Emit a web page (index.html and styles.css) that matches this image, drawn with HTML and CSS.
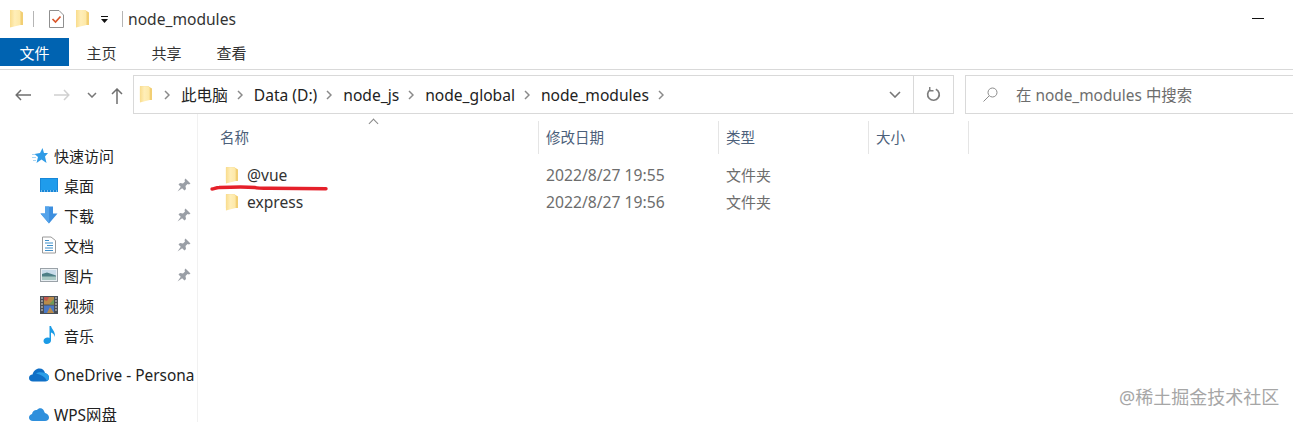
FILE: index.html
```html
<!DOCTYPE html>
<html lang="zh-CN">

<head>
    <meta charset="UTF-8">
    <title>node_modules</title>
    <link rel="stylesheet" href="styles.css">
</head>

<body>
    <svg class="defs" width="0" height="0">
        <defs>
            <linearGradient id="folderFace" x1="0" x2="1" y1="0" y2="0">
                <stop offset="0" stop-color="#f9dc8c" />
                <stop offset=".45" stop-color="#ffeeb8" />
                <stop offset="1" stop-color="#fde8a6" />
            </linearGradient>
        </defs>
        <symbol id="folder" viewBox="0 0 14 18">
            <path d="M1 0H10L14 2.500V15H1Z" fill="#f2cf74" />
            <path d="M1 0H10.500L11.500 2V15L1 17.500Z" fill="url(#folderFace)" />
        </symbol>
        <symbol id="pin" viewBox="0 0 14 14">
            <path d="M8.500.5L13.500 5.500L12 6.500L10.500 6L8.500 8L9 11L7.500 12.500L1.500 6.500L3 5L6 5.500L8 3.500L7.500 2Z" fill="#9a9fa6" />
            <path d="M4 8.500L.5 13.500L5.500 10Z" fill="#9a9fa6" />
        </symbol>
        <symbol id="chev" viewBox="0 0 6 10">
            <path d="M1 1L5 5L1 9" fill="none" stroke="#8a8a8a" stroke-width="1.500" />
        </symbol>
    </svg>

    <header class="titlebar">
        <svg class="qa-folder"><use href="#folder" /></svg>
        <span class="qa-sep"></span>
        <svg class="qa-check" viewBox="0 0 15 18">
            <path d="M.5.500H10L14.500 5V17.500H.5Z" fill="#fff" stroke="#8f8f8f" />
            <path d="M3.500 9L6.500 12L11.500 6.500" fill="none" stroke="#d9572b" stroke-width="1.700" />
        </svg>
        <svg class="qa-folder2"><use href="#folder" /></svg>
        <svg class="qa-drop" viewBox="0 0 7 7">
            <path d="M0 0H7V1H0ZM0 3H7L3.500 7Z" fill="#111" />
        </svg>
        <span class="qa-sep2"></span>
        <span class="title-text">node_modules</span>
        <span class="minimize"></span>
    </header>

    <nav class="ribbon">
        <a class="tab tab-file">文件</a>
        <a class="tab">主页</a>
        <a class="tab">共享</a>
        <a class="tab">查看</a>
    </nav>

    <div class="navbar">
        <div class="nav-buttons">
            <svg class="nav-back" viewBox="0 0 16 12">
                <path d="M6 1L1.200 6L6 11M1.200 6H16" fill="none" stroke="#6f6f6f" stroke-width="1.500" />
            </svg>
            <svg class="nav-forward" viewBox="0 0 16 12">
                <path d="M10 1L14.800 6L10 11M14.800 6H0" fill="none" stroke="#d0d0d0" stroke-width="1.500" />
            </svg>
            <svg class="nav-recent" viewBox="0 0 10 6">
                <path d="M1 1L5 5L9 1" fill="none" stroke="#777" stroke-width="1.500" />
            </svg>
            <svg class="nav-up" viewBox="0 0 12 16">
                <path d="M1 6L6 1L11 6M6 1V16" fill="none" stroke="#6f6f6f" stroke-width="1.500" />
            </svg>
        </div>

        <div class="address">
            <svg class="addr-folder"><use href="#folder" /></svg>
            <svg class="chev"><use href="#chev" /></svg>
            <span>此电脑</span>
            <svg class="chev"><use href="#chev" /></svg>
            <span>Data (D:)</span>
            <svg class="chev"><use href="#chev" /></svg>
            <span>node_js</span>
            <svg class="chev"><use href="#chev" /></svg>
            <span>node_global</span>
            <svg class="chev"><use href="#chev" /></svg>
            <span>node_modules</span>
            <svg class="chev"><use href="#chev" /></svg>
            <svg class="addr-drop" viewBox="0 0 12 7">
                <path d="M1 1L6 6L11 1" fill="none" stroke="#777" stroke-width="1.600" />
            </svg>
            <div class="addr-refresh">
                <svg viewBox="0 0 16 16" width="15" height="15">
                    <path d="M10.500 2.300A6.200 6.200 0 1 1 4.500 2.800" fill="none" stroke="#7d7d7d" stroke-width="1.800" />
                    <path d="M4 0V4H8" fill="none" stroke="#7d7d7d" stroke-width="1.500" />
                </svg>
            </div>
        </div>

        <div class="search">
            <svg class="search-icon" viewBox="0 0 15 15">
                <circle cx="9.500" cy="5.500" r="4.500" fill="none" stroke="#8c8c8c" />
                <path d="M6 9L.5 14.500" stroke="#8c8c8c" />
            </svg>
            <span>在 node_modules 中搜索</span>
        </div>
    </div>

    <div class="main">
        <aside class="sidebar">
            <div class="side-row side-top">
                <svg class="ic-star" viewBox="0 0 16 15">
                    <path d="M10.500 0L12 5L16 5L13 8.500L14.500 15L9.500 11.500L4.500 15L6 9L2.500 6L8 5Z" fill="#2f9be6" />
                    <path d="M0 6.500H3M0 9.500H4M1 12.500H4" stroke="#a9d4f2" />
                </svg>
                <span>快速访问</span>
            </div>
            <div class="side-row">
                <svg class="ic" viewBox="0 0 18 14">
                    <rect width="18" height="14" fill="#1787d8" />
                    <rect x="1" y="1" width="16" height="11" fill="#1f9cec" />
                    <path d="M1 13H17" stroke="#d5ecfb" stroke-dasharray="1 2" />
                </svg>
                <span>桌面</span>
                <svg class="pin"><use href="#pin" /></svg>
            </div>
            <div class="side-row">
                <svg class="ic" viewBox="0 0 18 17">
                    <path d="M5 0H13V7H17.500L9 17L.5 7H5Z" fill="#3d8fdf" />
                    <path d="M5 0H9V17L.5 7H5Z" fill="#54a3ea" />
                </svg>
                <span>下载</span>
                <svg class="pin"><use href="#pin" /></svg>
            </div>
            <div class="side-row">
                <svg class="ic" viewBox="0 0 18 17">
                    <path d="M2.500.5H11L15.500 4V16.500H2.500Z" fill="#fff" stroke="#9a9a9a" />
                    <path d="M5 4H9M5 6.500H13M7 9H13M5 11.500H13M5 14H13" stroke="#3f8fc9" />
                </svg>
                <span>文档</span>
                <svg class="pin"><use href="#pin" /></svg>
            </div>
            <div class="side-row">
                <svg class="ic" viewBox="0 0 18 14">
                    <rect x=".5" y=".5" width="17" height="13" fill="#e9eff3" stroke="#9aa2a8" />
                    <rect x="2" y="2" width="14" height="5" fill="#c9dcea" />
                    <path d="M2 6L7 4.500L16 7.500V9H2Z" fill="#4d7f86" />
                    <rect x="2" y="8.500" width="14" height="3.500" fill="#a9c9c4" />
                </svg>
                <span>图片</span>
                <svg class="pin"><use href="#pin" /></svg>
            </div>
            <div class="side-row">
                <svg class="ic" viewBox="0 0 18 18">
                    <rect width="18" height="18" fill="#4a4f55" />
                    <rect x="4" y="1" width="10" height="7.500" fill="#b98b4a" />
                    <path d="M4 1H9L7 5L4 4Z" fill="#c2574f" />
                    <path d="M9 8.500L14 3V8.500Z" fill="#6f9a58" />
                    <rect x="4" y="9.500" width="10" height="7.500" fill="#4a78c4" />
                    <path d="M7 17L10 11L14 17Z" fill="#b98b4a" />
                    <path d="M1 2H3M1 5H3M1 8H3M1 11H3M1 14H3M15 2H17M15 5H17M15 8H17M15 11H17M15 14H17" stroke="#d8d8d8" stroke-width="1.200" />
                </svg>
                <span>视频</span>
            </div>
            <div class="side-row">
                <svg class="ic" viewBox="0 0 18 18">
                    <path d="M9.500 0H11C11.500 3 15.500 5 15 11C14 8 12.500 7 11 6.500V14.500C11 16.500 9 18 6.500 18C4.500 18 3.500 16.500 3.500 15C3.500 13 5.500 11.500 7.500 11.500C8.500 11.500 9 11.800 9.500 12Z" fill="#1b9be6" />
                </svg>
                <span>音乐</span>
            </div>
            <div class="side-row side-top side-gap">
                <svg class="ic-cloud" viewBox="0 0 20 13">
                    <path d="M4 13C1.500 13 0 11.500 0 9.500C0 7.500 1.500 6 3.500 6C4.500 2.500 7 0 10.500 0C13.500 0 15.500 2 16 4.500C18.500 5 20 7 20 9C20 11.500 18.500 13 16 13Z" fill="#0f6fc6" />
                    <path d="M7 5C9 3.500 13 3.500 16 4.500C18.500 5 20 7 20 9C20 11 19 12 18 12.500C16 8 12 6 7 5Z" fill="#2a9ee8" />
                </svg>
                <span class="side-latin">OneDrive - Persona</span>
            </div>
            <div class="side-row side-top side-gap2">
                <svg class="ic-cloud" viewBox="0 0 20 14">
                    <path d="M4 14C1.500 14 0 12.500 0 10.500C0 8.500 1.500 7.500 3 7C3.500 4 6 2.500 8 3C9.500 .5 13 .5 14.500 3C15.500 5 15.500 5.500 16 6C18.500 6.500 20 8.500 20 10.500C20 12.500 18.500 14 16 14Z" fill="#2e8fdc" />
                </svg>
                <span class="side-latin">WPS网盘</span>
            </div>
        </aside>

        <section class="files">
            <div class="file-head">
                <div class="col col-name">名称<span class="sort-caret"></span></div>
                <div class="col">修改日期</div>
                <div class="col">类型</div>
                <div class="col">大小</div>
            </div>
            <div class="file-row first">
                <div class="cell-name"><svg class="file-folder"><use href="#folder" /></svg>@vue</div>
                <div class="cell cell-date">2022/8/27 19:55</div>
                <div class="cell">文件夹</div>
            </div>
            <div class="file-row">
                <div class="cell-name"><svg class="file-folder"><use href="#folder" /></svg>express</div>
                <div class="cell cell-date">2022/8/27 19:56</div>
                <div class="cell">文件夹</div>
            </div>
        </section>
    </div>

    <svg class="red-line" viewBox="0 0 118 6" width="118" height="6">
        <path d="M2 4C4 4 6 2.500 9 2.500C20 2 40 2 45 2.500C46 3 50 3.300 60 3.300L116 3.800" fill="none" stroke="#e5202a" stroke-width="3.400" stroke-linecap="round" />
    </svg>
    <div class="watermark">@稀土掘金技术社区</div>
</body>

</html>
```

FILE: styles.css
```css
* {
    box-sizing: border-box;
}

html,
body {
    margin: 0;
    height: 100%;
}

body {
    position: relative;
    width: 1293px;
    height: 422px;
    overflow: hidden;
    background-color: white;
    font-family: "Noto Sans", "Noto Sans CJK SC", sans-serif;
    font-size: 15.600px;
    color: #222;
}

svg {
    display: block;
    flex: none;
}

.defs {
    position: absolute;
}

/* title bar */
.titlebar {
    display: flex;
    align-items: center;
    height: 38px;
    padding-left: 9px;
}

.qa-folder,
.qa-folder2 {
    width: 14px;
    height: 18px;
}

.qa-sep {
    width: 1px;
    height: 16px;
    margin-left: 10px;
    background-color: #b5b5b5;
}

.qa-check {
    width: 15px;
    height: 18px;
    margin-left: 15px;
}

.qa-folder2 {
    margin-left: 11px;
}

.qa-drop {
    width: 7px;
    height: 7px;
    margin-left: 12px;
}

.qa-sep2 {
    width: 1px;
    height: 16px;
    margin-left: 14px;
    background-color: #b5b5b5;
}

.title-text {
    margin-left: 5px;
    color: #333;
}

.minimize {
    width: 12px;
    height: 1px;
    margin-left: auto;
    margin-right: 29px;
    margin-bottom: 2px;
    background-color: #111;
}

/* ribbon tabs */
.ribbon {
    display: flex;
    align-items: flex-start;
    height: 32px;
    border-bottom: 1px solid #d9d9d9;
}

.tab {
    width: 65px;
    height: 28px;
    line-height: 30px;
    text-align: center;
    font-size: 15px;
    color: #333;
}

.tab-file {
    width: 69px;
    background-color: #0063b1;
    color: white;
}

/* back / forward / address / search */
.navbar {
    position: relative;
    display: flex;
    height: 44px;
    padding-top: 5px;
}

.nav-buttons {
    display: flex;
    flex: none;
    align-items: center;
    width: 133px;
    height: 39px;
    padding-left: 15px;
}

.nav-back,
.nav-forward {
    width: 16px;
    height: 12px;
}

.nav-forward {
    margin-left: 23px;
}

.nav-recent {
    width: 10px;
    height: 6px;
    margin-left: 17px;
}

.nav-up {
    width: 12px;
    height: 16px;
    margin-left: 14px;
    margin-top: 2px;
}

.address {
    display: flex;
    flex: none;
    align-items: center;
    width: 821px;
    height: 39px;
    padding-left: 5px;
    border: 1px solid #d9d9d9;
    color: #222;
}

.addr-folder {
    width: 13px;
    height: 17px;
    margin-right: 3px;
}

.chev {
    width: 6px;
    height: 10px;
    margin: 0 11px 0 9px;
}

.addr-drop {
    width: 12px;
    height: 7px;
    margin-left: auto;
    margin-right: 12px;
}

.addr-refresh {
    display: flex;
    align-items: center;
    justify-content: center;
    width: 40px;
    height: 100%;
    border-left: 1px solid #d9d9d9;
}

.search {
    display: flex;
    flex: none;
    align-items: center;
    width: 340px;
    height: 39px;
    margin-left: 11px;
    padding-left: 17px;
    border: 1px solid #d9d9d9;
    border-right: none;
    font-size: 15.400px;
    color: #6d6d6d;
}

.search-icon {
    width: 15px;
    height: 15px;
    margin-right: 18px;
}

/* main area */
.main {
    display: flex;
    height: 308px;
}

.sidebar {
    width: 198px;
    padding-top: 26px;
    border-right: 1px solid #f1f1f1;
    overflow: hidden;
}

.side-row {
    display: flex;
    align-items: center;
    height: 30px;
    padding-left: 40px;
    white-space: nowrap;
    font-size: 15px;
}

.side-latin {
    font-size: 15.400px;
}

.ic {
    width: 18px;
    height: 18px;
    margin-right: 6px;
}

.side-top {
    padding-left: 32px;
}

.ic-star {
    width: 16px;
    height: 15px;
    margin-right: 6px;
}

.side-gap {
    margin-top: 10px;
    padding-left: 29px;
}

.side-gap2 {
    margin-top: 9px;
    padding-left: 29px;
}

.ic-cloud {
    width: 20px;
    height: 14px;
    margin-right: 5px;
}

.pin {
    width: 14px;
    height: 14px;
    margin-left: auto;
    margin-right: 6px;
}

/* file list */
.files {
    flex: 1;
    padding-top: 7px;
}

.file-head,
.file-row {
    display: grid;
    grid-template-columns: 341px 180px 150px 100px;
}

.file-head {
    height: 31px;
}

.col {
    position: relative;
    padding-left: 7px;
    border-right: 1px solid #e5e5e5;
    line-height: 33px;
    font-size: 14.500px;
    color: #4c607a;
}

.col-name {
    padding-left: 22px;
}

.sort-caret {
    position: absolute;
    left: 172px;
    top: -1px;
    width: 7px;
    height: 7px;
    border-left: 1px solid #888;
    border-top: 1px solid #888;
    transform: rotate(45deg);
}

.file-row {
    height: 27px;
    line-height: 27px;
}

.file-row.first {
    margin-top: 10px;
}

.cell-name {
    display: flex;
    align-items: center;
    padding-left: 27px;
    color: #333;
}

.file-folder {
    width: 13px;
    height: 17px;
    margin-right: 9px;
}

.cell {
    padding-left: 7px;
    font-size: 15px;
    color: #6d6d6d;
}

.cell-date {
    font-size: 15.700px;
}

/* overlays */
.red-line {
    position: absolute;
    left: 210px;
    top: 185px;
}

.watermark {
    position: absolute;
    left: 1119px;
    top: 384px;
    font-size: 18px;
    line-height: 26px;
    color: #a6a6a6;
}
```
